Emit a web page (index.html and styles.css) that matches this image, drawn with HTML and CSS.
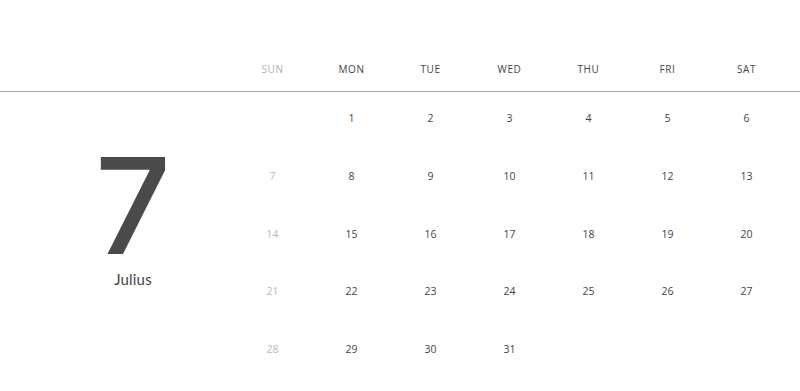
FILE: index.html
```html
<!DOCTYPE html>
<html lang="en">
<head>
<meta charset="utf-8">
<title>Calendar</title>
<link rel="stylesheet" href="styles.css">
</head>
<body>
<div class="calendar">
  <div class="head">
    <div class="head-spacer"></div>
    <div class="week">
      <div class="dname sun">SUN</div>
      <div class="dname">MON</div>
      <div class="dname">TUE</div>
      <div class="dname">WED</div>
      <div class="dname">THU</div>
      <div class="dname">FRI</div>
      <div class="dname">SAT</div>
    </div>
  </div>
  <div class="body">
    <div class="month">
      <div class="month-num">7</div>
      <div class="month-name">Julius</div>
    </div>
    <div class="days">
      <div class="day"></div>
      <div class="day">1</div>
      <div class="day">2</div>
      <div class="day">3</div>
      <div class="day">4</div>
      <div class="day">5</div>
      <div class="day">6</div>
      <div class="day sun">7</div>
      <div class="day">8</div>
      <div class="day">9</div>
      <div class="day">10</div>
      <div class="day">11</div>
      <div class="day">12</div>
      <div class="day">13</div>
      <div class="day sun">14</div>
      <div class="day">15</div>
      <div class="day">16</div>
      <div class="day">17</div>
      <div class="day">18</div>
      <div class="day">19</div>
      <div class="day">20</div>
      <div class="day sun">21</div>
      <div class="day">22</div>
      <div class="day">23</div>
      <div class="day">24</div>
      <div class="day">25</div>
      <div class="day">26</div>
      <div class="day">27</div>
      <div class="day sun">28</div>
      <div class="day">29</div>
      <div class="day">30</div>
      <div class="day">31</div>
    </div>
  </div>
</div>
</body>
</html>
```
FILE: styles.css
```css
html, body {
  margin: 0;
  padding: 0;
  background: #ffffff;
}
body {
  font-family: "Open Sans", "Liberation Sans", sans-serif;
  color: #444444;
  width: 800px;
  height: 391px;
  overflow: hidden;
}
.calendar {
  display: flex;
  flex-direction: column;
  padding-top: 47px;
}
.head {
  display: flex;
  height: 44px;
  border-bottom: 1px solid #a8a8a8;
}
.head-spacer {
  width: 233px;
  flex: none;
}
.week {
  display: grid;
  grid-template-columns: repeat(7, 79px);
  align-items: center;
}
.dname {
  text-align: center;
  font-size: 10px;
  letter-spacing: 0.6px;
  color: #444444;
  line-height: 14px;
}
.dname.sun {
  color: #b0b0b0;
}
.body {
  display: flex;
}
.month {
  width: 233px;
  flex: none;
  box-sizing: border-box;
  padding-left: 33px;
  padding-top: 54px;
  display: flex;
  flex-direction: column;
  align-items: center;
}
.month-num {
  font-family: "Inter", "Open Sans", sans-serif;
  font-size: 133px;
  line-height: 120px;
  color: #4a4a4a;
  font-weight: 500;
}
.month-name {
  font-family: "Lato", "Open Sans", sans-serif;
  font-size: 15px;
  line-height: 18px;
  color: #444444;
  margin-top: 4px;
  letter-spacing: 0.2px;
}
.days {
  display: grid;
  grid-template-columns: repeat(7, 79px);
  grid-auto-rows: 57.75px;
}
.day {
  text-align: center;
  font-size: 10.5px;
  line-height: 14px;
  padding-top: 19px;
  color: #444444;
}
.day.sun {
  color: #b8b8b8;
}
```
